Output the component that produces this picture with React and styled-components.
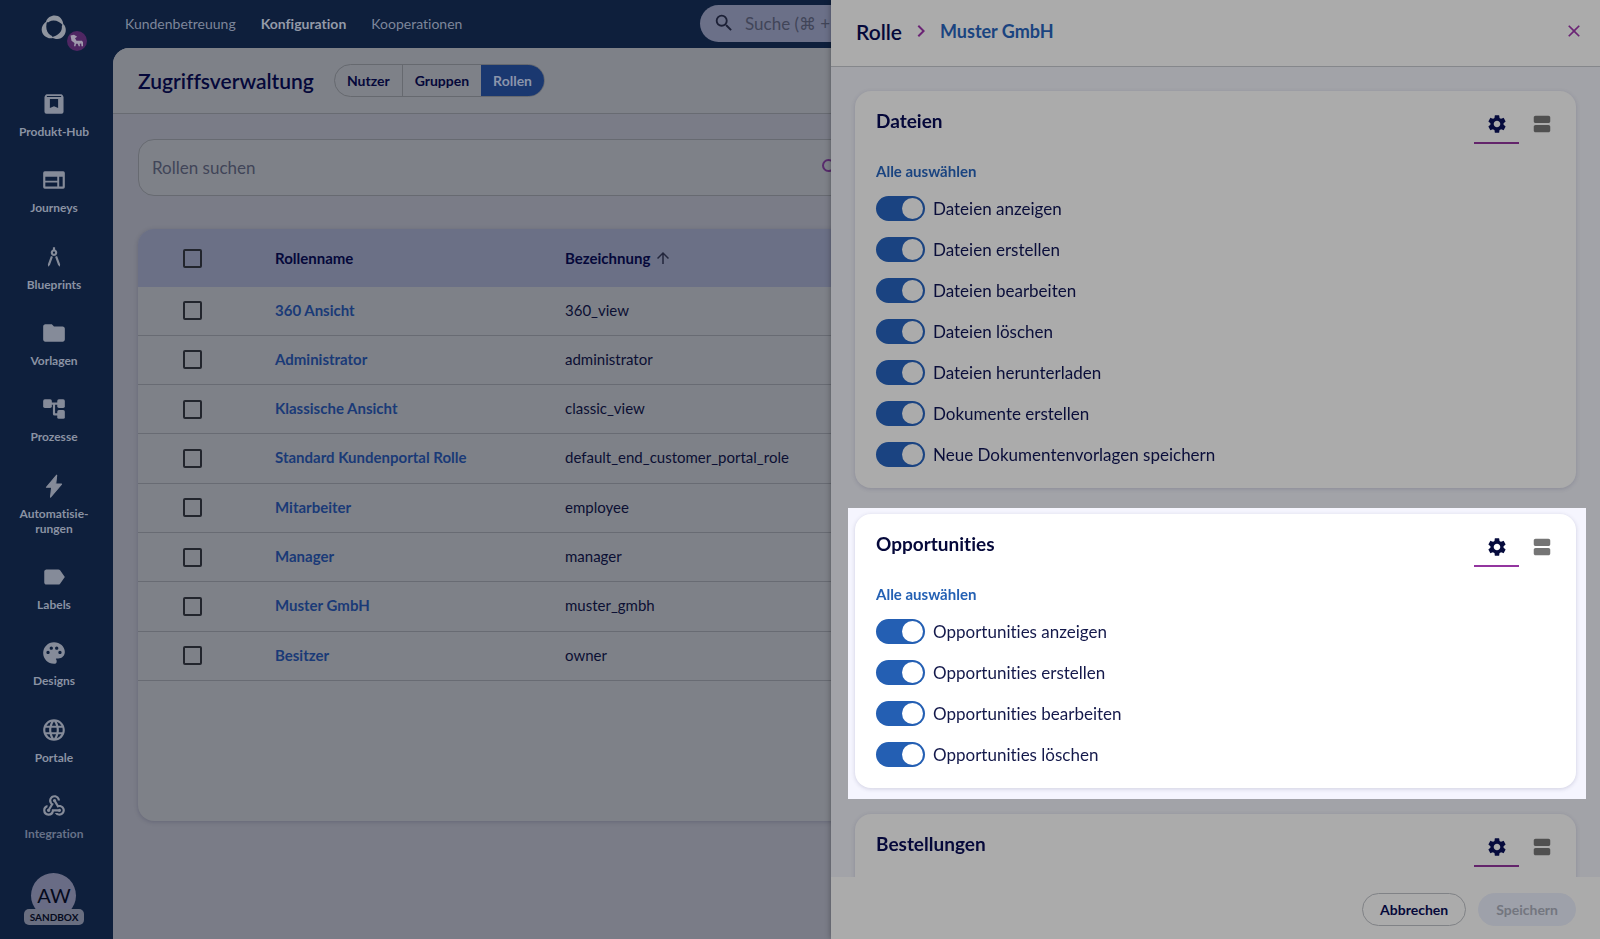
import React from 'react';
import styled, { createGlobalStyle } from 'styled-components';
import {
  MdArchitecture, MdFolder, MdLabel, MdPalette, MdLanguage, MdWebhook, MdSearch,
  MdSettings, MdViewAgenda, MdClose, MdChevronRight, MdArrowUpward,
} from 'react-icons/md';

const GlobalStyle = createGlobalStyle`
  * {
    box-sizing: border-box;
  }
  body {
    margin: 0;
    background: #0e1f3c;
    font-family: Lato, 'Liberation Sans', sans-serif;
    font-variant-ligatures: none;
    color: #05083a;
  }
  button, input {
    font-family: inherit;
    font-variant-ligatures: inherit;
  }
`;

const Shell = styled.div`
  display: flex;
  height: 100vh;
  overflow: hidden;
`;
const Rail = styled.aside`
  width: 113px;
  flex-shrink: 0;
  display: flex;
  flex-direction: column;
  align-items: center;
  padding: 14px 4px 14px;
  background: #0e1f3c;
`;
const Logo = styled.a`
  position: relative;
  display: block;
  height: 28px;
  margin: 0 5px 49px 0;
`;
const LogoBadge = styled.span`
  position: absolute;
  left: 27px;
  top: 17px;
  width: 20px;
  height: 20px;
  border-radius: 50%;
  background: #4f2763;
`;
const RailNav = styled.nav`
  flex: 1;
  width: 100%;
  padding-right: 5px;
  display: flex;
  flex-direction: column;
  justify-content: space-between;
`;
const RailItem = styled.a`
  display: flex;
  flex-direction: column;
  align-items: center;
  gap: 7px;
  color: ${props => (props.$faded ? '#667188' : '#8a92a3')};
  font-size: 12px;
  font-weight: 700;
  line-height: 15px;
  text-align: center;
  text-decoration: none;
  white-space: pre-line;
  svg {
    width: 26px;
    height: 26px;
    color: #858b99;
  }
`;
const Account = styled.button`
  display: flex;
  flex-direction: column;
  align-items: center;
  margin: 32px 5px 0 0;
  padding: 0;
  border: 0;
  background: none;
`;
const Avatar = styled.span`
  width: 45px;
  height: 45px;
  border-radius: 50%;
  background: #696c85;
  color: #050a1c;
  font-size: 20px;
  line-height: 45px;
`;
const Badge = styled.span`
  margin-top: -9px;
  padding: 0 6px;
  border-radius: 5px;
  background: #696e80;
  color: #050a1c;
  font-size: 10px;
  font-weight: 700;
  line-height: 16px;
`;

const Content = styled.div`
  flex: 1;
  min-width: 0;
  display: flex;
  flex-direction: column;
`;
const TopBar = styled.header`
  height: 48px;
  display: grid;
  grid-template-columns: 575px 380px;
  align-items: center;
  padding: 0 12px 2px;
`;
const TopNav = styled.nav`
  display: flex;
  gap: 25px;
`;
const TopLink = styled.a`
  color: ${props => (props.$active ? '#949aa8' : '#7d869a')};
  font-size: 14px;
  font-weight: ${props => (props.$active ? 700 : 400)};
  text-decoration: none;
`;
const GlobalSearch = styled.label`
  display: flex;
  align-items: center;
  gap: 10px;
  height: 37px;
  padding: 0 13px;
  border-radius: 19px;
  background: #6b7088;
  color: #1c2036;
  svg {
    width: 22px;
    height: 22px;
  }
`;
const BareInput = styled.input`
  flex: 1;
  min-width: 0;
  padding: 0;
  border: 0;
  outline: 0;
  background: none;
  font-size: 17px;
  &::placeholder {
    color: #414558;
    opacity: 1;
  }
`;
const Page = styled.main`
  flex: 1;
  display: flex;
  flex-direction: column;
  border-top-left-radius: 16px;
  overflow: hidden;
  background: #7a7c87;
`;
const PageHeader = styled.div`
  display: flex;
  align-items: center;
  gap: 20px;
  height: 66px;
  padding: 0 25px;
  border-bottom: 1px solid #686b72;
  background: #7e8188;
`;
const PageTitle = styled.h1`
  margin: 0;
  font-size: 21px;
  font-weight: 600;
`;
const Segments = styled.div`
  display: flex;
  height: 33px;
  border: 1px solid #66696f;
  border-radius: 17px;
  overflow: hidden;
`;
const Segment = styled.button`
  padding: 0 12px;
  border: 0;
  border-right: ${props => (props.$active ? '0' : '1px solid #66696f')};
  background: ${props => (props.$active ? '#1a3870' : 'none')};
  color: ${props => (props.$active ? '#8b95ab' : '#05083a')};
  font-size: 14px;
  font-weight: 700;
  &:nth-last-child(2) {
    border-right: 0;
  }
`;
const PageBody = styled.div`
  padding: 25px;
`;
const RoleSearch = styled.label`
  display: flex;
  align-items: center;
  width: 50%;
  height: 57px;
  padding: 0 13px;
  border: 1px solid #676a71;
  border-radius: 16px;
  background: #7e8188;
  svg {
    width: 24px;
    height: 24px;
    color: #592c6d;
  }
`;
const TableCard = styled.div`
  height: 592px;
  margin-top: 33px;
  border-radius: 16px;
  overflow: hidden;
  background: #7e8188;
  box-shadow: 0 1px 4px rgba(40, 40, 70, 0.25);
`;
const Table = styled.table`
  width: 100%;
  height: 452px;
  table-layout: fixed;
  border-collapse: collapse;
  font-size: 15px;
`;
const Th = styled.th`
  width: ${props => props.$width || 'auto'};
  height: 58px;
  padding: 0 0 0 ${props => props.$indent || '0'};
  background: #6b7086;
  font-weight: 700;
  text-align: left;
`;
const SortButton = styled.button`
  display: flex;
  align-items: center;
  gap: 4px;
  padding: 0;
  border: 0;
  background: none;
  color: inherit;
  font-size: 15px;
  font-weight: 700;
  svg {
    width: 18px;
    height: 18px;
    color: #23263c;
  }
`;
const Td = styled.td`
  padding: 0 0 2px;
  border-bottom: 1px solid #686b73;
  color: #0b0f33;
`;
const CheckCell = styled(Td)`
  padding: 0 0 0 45px;
`;
const RoleLink = styled.a`
  color: #1a3a77;
  font-weight: 700;
  text-decoration: none;
`;
const Check = styled.input`
  appearance: none;
  display: block;
  width: 19px;
  height: 19px;
  margin: 0;
  border: 2px solid #22252d;
  border-radius: 2px;
`;

const Drawer = styled.section`
  position: fixed;
  top: 0;
  right: 0;
  bottom: 0;
  width: 769px;
  display: flex;
  flex-direction: column;
  background: #a2a3a8;
  box-shadow: 0 0 6px rgba(0, 0, 0, 0.35);
`;
const DrawerHeader = styled.header`
  display: flex;
  align-items: center;
  flex-shrink: 0;
  gap: 7px;
  height: 67px;
  padding: 0 16px 4px 25px;
  border-bottom: 1px solid #85878b;
  background: #ababab;
`;
const DrawerTitle = styled.h2`
  margin: 0;
  font-size: 21px;
  font-weight: 600;
`;
const Crumb = styled.a`
  color: #1a4480;
  font-size: 18px;
  font-weight: 700;
  text-decoration: none;
`;
const CrumbArrow = styled(MdChevronRight)`
  width: 24px;
  height: 24px;
  color: #6b2475;
`;
const CloseButton = styled.button`
  display: flex;
  margin-left: auto;
  padding: 0;
  border: 0;
  background: none;
  color: #6b2475;
  svg {
    width: 20px;
    height: 20px;
  }
`;
const DrawerBody = styled.div`
  flex: 1;
  min-height: 0;
  display: flex;
  flex-direction: column;
  gap: 9px;
  padding: 18px 14px 0 17px;
  overflow: hidden;
`;
const Spot = styled.div`
  flex-shrink: 0;
  padding: 6px 10px 11px 7px;
  background: ${props => (props.$lit ? '#f5f5fe' : 'transparent')};
`;
const Card = styled.section`
  min-height: 120px;
  padding: 10px 12px 21px 21px;
  border-radius: 16px;
  background: ${props => (props.$lit ? '#ffffff' : '#ababab')};
  box-shadow: 0 1px 4px ${props => (props.$lit ? 'rgba(60, 60, 110, 0.2)' : 'rgba(50, 50, 90, 0.2)')};
`;
const CardHead = styled.div`
  display: flex;
  justify-content: space-between;
  height: 43px;
`;
const CardTitle = styled.h3`
  margin: 8px 0 0;
  font-size: 19px;
  line-height: 24px;
  font-weight: 700;
`;
const Tabs = styled.div`
  display: flex;
`;
const Tab = styled.button`
  width: 45px;
  padding: 4px 0 0;
  border: 0;
  border-bottom: 2px solid ${props => (props.$active ? (props.$lit ? '#93359f' : '#63246b') : 'transparent')};
  background: none;
  color: ${props => (props.$active ? '#060b3d' : props.$lit ? '#757575' : '#505050')};
  svg {
    display: block;
    width: 22px;
    height: 22px;
    margin: 0 auto;
  }
`;
const SelectAll = styled.button`
  display: block;
  margin: 18px 0 16px;
  padding: 0;
  border: 0;
  background: none;
  color: ${props => (props.$lit ? '#2461b4' : '#1a4480')};
  font-size: 15px;
  line-height: 18px;
  font-weight: 700;
`;
const SwitchRow = styled.label`
  display: flex;
  align-items: center;
  gap: 8px;
  height: 25px;
  margin-bottom: 16px;
  font-size: 17px;
  color: ${props => (props.$lit ? '#14194b' : '#0a0e3a')};
  &:last-child {
    margin-bottom: 0;
  }
`;
const Switch = styled.input`
  appearance: none;
  display: flex;
  align-items: center;
  justify-content: flex-end;
  width: 49px;
  height: 25px;
  margin: 0;
  padding: 2px;
  border-radius: 13px;
  background: ${props => (props.$lit ? '#245fb3' : '#1a4381')};
  &::before {
    content: '';
    width: 21px;
    height: 21px;
    border-radius: 50%;
    background: ${props => (props.$lit ? '#ffffff' : '#ababab')};
  }
`;
const DrawerFooter = styled.footer`
  display: flex;
  align-items: center;
  justify-content: flex-end;
  flex-shrink: 0;
  gap: 12px;
  height: 62px;
  padding: 3px 24px 0;
  background: #ababab;
`;
const PillButton = styled.button`
  height: 33px;
  padding: 0 17px;
  border: 1px solid ${props => (props.disabled ? '#9ea1aa' : '#808286')};
  border-radius: 17px;
  background: ${props => (props.disabled ? '#9ea1aa' : 'none')};
  color: ${props => (props.disabled ? '#73767f' : '#05083a')};
  font-size: 14px;
  font-weight: 700;
`;

const ProductHubIcon = () => (
  <svg viewBox="0 0 24 24" fill="currentColor">
    <path fillRule="evenodd" d="M5.500 3h13q1 0 1.500 1l.8 1.500v13.700q0 1.800-1.800 1.800H5q-1.800 0-1.800-1.800V5.500L4 4q.5-1 1.500-1zM5.600 4.600l-.4.900h13.600l-.4-.9zM8.200 7.300v8.500l3.800-1.800 3.800 1.800V7.300z" />
  </svg>
);
const JourneysIcon = () => (
  <svg viewBox="0 0 24 24" fill="currentColor">
    <path fillRule="evenodd" d="M3.500 4h17q1.500 0 1.500 1.500v13q0 1.500-1.500 1.500h-17Q2 20 2 18.500v-13Q2 4 3.500 4zM4 9v3.600h11V9zM4 14.200V18h11v-3.800zM16.800 9v9H20V9z" />
  </svg>
);
const ProcessIcon = () => (
  <svg viewBox="0 0 24 24" fill="currentColor">
    <rect x="2" y="3" width="8" height="8" rx="1.500" />
    <rect x="15" y="3" width="7" height="8" rx="1.500" />
    <rect x="15" y="13" width="7" height="8" rx="1.500" />
    <path d="M9 6h7v2h-3v8h3v2h-3.500q-1.500 0-1.500-1.500V8H9z" />
  </svg>
);
const BoltIcon = () => (
  <svg viewBox="0 0 24 24" fill="currentColor" stroke="currentColor" strokeLinejoin="round">
    <path d="M14.500 2L5 13.200h4.800L8.800 22.300 19 10.200h-5.400z" />
  </svg>
);

const LogoMark = () => (
  <svg width="28" height="28" viewBox="-14 -14 28 28" fill="#90959f">
    {[0, 120, 240].map(angle => (
      <path key={angle} transform={`rotate(${angle})`} d="M-8-6.500C-5.500-14.500 9-16 9.500-2C6-7-.5-9-4.500-6.500Q-6.500-4.800-8-6.500Z" />
    ))}
  </svg>
);

const railItems = [
  { label: 'Produkt-Hub', icon: <ProductHubIcon /> },
  { label: 'Journeys', icon: <JourneysIcon /> },
  { label: 'Blueprints', icon: <MdArchitecture /> },
  { label: 'Vorlagen', icon: <MdFolder /> },
  { label: 'Prozesse', icon: <ProcessIcon /> },
  { label: 'Automatisie-\nrungen', icon: <BoltIcon /> },
  { label: 'Labels', icon: <MdLabel /> },
  { label: 'Designs', icon: <MdPalette /> },
  { label: 'Portale', icon: <MdLanguage /> },
  { label: 'Integration', icon: <MdWebhook />, faded: true },
];

const roles = [
  { name: '360 Ansicht', slug: '360_view' },
  { name: 'Administrator', slug: 'administrator' },
  { name: 'Klassische Ansicht', slug: 'classic_view' },
  { name: 'Standard Kundenportal Rolle', slug: 'default_end_customer_portal_role' },
  { name: 'Mitarbeiter', slug: 'employee' },
  { name: 'Manager', slug: 'manager' },
  { name: 'Muster GmbH', slug: 'muster_gmbh' },
  { name: 'Besitzer', slug: 'owner' },
];

const groups = [
  {
    title: 'Dateien',
    permissions: [
      'Dateien anzeigen', 'Dateien erstellen', 'Dateien bearbeiten', 'Dateien löschen',
      'Dateien herunterladen', 'Dokumente erstellen', 'Neue Dokumentenvorlagen speichern',
    ],
  },
  {
    title: 'Opportunities',
    lit: true,
    permissions: [
      'Opportunities anzeigen', 'Opportunities erstellen', 'Opportunities bearbeiten', 'Opportunities löschen',
    ],
  },
  { title: 'Bestellungen', permissions: [] },
];

const PermissionCard = ({ title, permissions, lit }) => (
  <Spot $lit={lit}>
    <Card $lit={lit}>
      <CardHead>
        <CardTitle>{title}</CardTitle>
        <Tabs>
          <Tab $active $lit={lit} aria-label="Einstellungen"><MdSettings /></Tab>
          <Tab $lit={lit} aria-label="Ansicht"><MdViewAgenda /></Tab>
        </Tabs>
      </CardHead>
      {permissions.length > 0 && <SelectAll $lit={lit}>Alle auswählen</SelectAll>}
      {permissions.map(permission => (
        <SwitchRow key={permission} $lit={lit}>
          <Switch type="checkbox" role="switch" defaultChecked $lit={lit} />
          {permission}
        </SwitchRow>
      ))}
    </Card>
  </Spot>
);

const App = () => (
  <>
    <GlobalStyle />
    <Shell>
      <Rail>
        <Logo href="#home" aria-label="Start">
          <LogoMark />
          <LogoBadge>
            <svg width="20" height="20" viewBox="0 0 20 20" fill="#a09aad">
              <path d="M3.500 4.500L7 3.800l3.200 2L8 7.200l1.500 2.500H15l1 1.500v4h-1.500l-.3-2.700-1.500.2.3 2.500h-1.300l-1-2.500H9l-.5 2.500H7l.5-3.200-3-2.300z" />
            </svg>
          </LogoBadge>
        </Logo>
        <RailNav>
          {railItems.map(item => (
            <RailItem key={item.label} href="#nav" $faded={item.faded}>
              {item.icon}
              <span>{item.label}</span>
            </RailItem>
          ))}
        </RailNav>
        <Account>
          <Avatar>AW</Avatar>
          <Badge>SANDBOX</Badge>
        </Account>
      </Rail>

      <Content>
        <TopBar>
          <TopNav>
            <TopLink href="#kunden">Kundenbetreuung</TopLink>
            <TopLink href="#konfiguration" $active>Konfiguration</TopLink>
            <TopLink href="#kooperationen">Kooperationen</TopLink>
          </TopNav>
          <GlobalSearch>
            <MdSearch />
            <BareInput placeholder="Suche (⌘ + K)" aria-label="Suche" />
          </GlobalSearch>
        </TopBar>
        <Page>
          <PageHeader>
            <PageTitle>Zugriffsverwaltung</PageTitle>
            <Segments>
              <Segment>Nutzer</Segment>
              <Segment>Gruppen</Segment>
              <Segment $active>Rollen</Segment>
            </Segments>
          </PageHeader>
          <PageBody>
            <RoleSearch>
              <BareInput placeholder="Rollen suchen" aria-label="Rollen suchen" />
              <MdSearch />
            </RoleSearch>
            <TableCard>
              <Table>
                <thead>
                  <tr>
                    <Th $width="137px" $indent="45px"><Check type="checkbox" aria-label="Alle Rollen" /></Th>
                    <Th $width="290px">Rollenname</Th>
                    <Th><SortButton>Bezeichnung <MdArrowUpward /></SortButton></Th>
                  </tr>
                </thead>
                <tbody>
                  {roles.map(role => (
                    <tr key={role.slug}>
                      <CheckCell><Check type="checkbox" aria-label={role.name} /></CheckCell>
                      <Td><RoleLink href="#rolle">{role.name}</RoleLink></Td>
                      <Td>{role.slug}</Td>
                    </tr>
                  ))}
                </tbody>
              </Table>
            </TableCard>
          </PageBody>
        </Page>
      </Content>
    </Shell>

    <Drawer>
      <DrawerHeader>
        <DrawerTitle>Rolle</DrawerTitle>
        <CrumbArrow />
        <Crumb href="#muster">Muster GmbH</Crumb>
        <CloseButton aria-label="Schließen"><MdClose /></CloseButton>
      </DrawerHeader>
      <DrawerBody>
        {groups.map(group => (
          <PermissionCard key={group.title} {...group} />
        ))}
      </DrawerBody>
      <DrawerFooter>
        <PillButton>Abbrechen</PillButton>
        <PillButton disabled>Speichern</PillButton>
      </DrawerFooter>
    </Drawer>
  </>
);

export default App;
